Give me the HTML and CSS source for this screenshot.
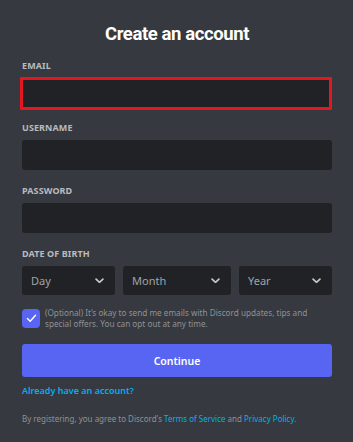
FILE: index.html
```html
<!DOCTYPE html>
<html>
<head>
<meta charset="utf-8">
<link rel="stylesheet" href="styles.css">
</head>
<body>
<main class="card">
  <h1 class="title">Create an account</h1>
  <div class="field">
    <label class="label">EMAIL</label>
    <div class="input input-email"></div>
  </div>
  <div class="field">
    <label class="label">USERNAME</label>
    <div class="input"></div>
  </div>
  <div class="field">
    <label class="label">PASSWORD</label>
    <div class="input"></div>
  </div>
  <div class="field">
    <label class="label">DATE OF BIRTH</label>
    <div class="dob">
      <div class="select select-day"><span>Day</span><svg class="chev" viewBox="0 0 10 6" width="9" height="5.5"><path d="M1.2 1.2 L5 4.8 L8.8 1.2" fill="none" stroke="currentColor" stroke-width="1.9" stroke-linecap="round" stroke-linejoin="round"/></svg></div>
      <div class="select"><span>Month</span><svg class="chev" viewBox="0 0 10 6" width="9" height="5.5"><path d="M1.2 1.2 L5 4.8 L8.8 1.2" fill="none" stroke="currentColor" stroke-width="1.9" stroke-linecap="round" stroke-linejoin="round"/></svg></div>
      <div class="select"><span>Year</span><svg class="chev" viewBox="0 0 10 6" width="9" height="5.5"><path d="M1.2 1.2 L5 4.8 L8.8 1.2" fill="none" stroke="currentColor" stroke-width="1.9" stroke-linecap="round" stroke-linejoin="round"/></svg></div>
    </div>
  </div>
  <div class="optin">
    <div class="checkbox"><svg viewBox="0 0 12 10" width="11" height="9"><path d="M1.5 5 L4.5 8 L10.5 1.5" fill="none" stroke="#fff" stroke-width="1.6" stroke-linecap="round" stroke-linejoin="round"/></svg></div>
    <p class="optin-text">(Optional) It’s okay to send me emails with Discord updates, tips and special offers. You can opt out at any time.</p>
  </div>
  <button class="continue">Continue</button>
  <a class="link already">Already have an account?</a>
  <p class="terms">By registering, you agree to Discord's <a class="link">Terms of Service</a> and <a class="link">Privacy Policy</a>.</p>
</main>
</body>
</html>
```

FILE: styles.css
```css
html, body {
  margin: 0;
  padding: 0;
  background: #36393f;
  height: 100%;
}
body {
  font-family: "Noto Sans", "Open Sans", sans-serif;
  color: #dcddde;
}
.card {
  padding: 23px 21px 0 22px;
  display: flex;
  flex-direction: column;
}
.title {
  margin: 0;
  font-family: Roboto, "Noto Sans", sans-serif;
  font-size: 18.5px;
  line-height: 22px;
  font-weight: 700;
  color: #ffffff;
  text-align: center;
  letter-spacing: -0.4px;
  height: 22px;
  margin-bottom: 15px;
}
.field {
  display: flex;
  flex-direction: column;
  margin-bottom: 15px;
}
.field:first-of-type {
  margin-bottom: 12px;
}
.label {
  font-size: 9px;
  line-height: 12px;
  font-weight: 700;
  color: #b9bbbe;
  letter-spacing: 0.1px;
  margin-bottom: 6px;
}
.input {
  height: 30px;
  background: #202225;
  border-radius: 3px;
}
.input-email {
  height: 27px;
  border: 3px solid #e4161f;
  border-radius: 0;
  margin-left: -2px;
  margin-top: -1px;
  background: #202226;
}
.dob {
  display: flex;
  gap: 8px;
}
.select {
  flex: 0 0 93px;
  height: 29px;
  background: #202225;
  border-radius: 3px;
  display: flex;
  align-items: center;
  justify-content: space-between;
  padding: 0 11px 0 9px;
  box-sizing: border-box;
  font-size: 11px;
  color: #a0a3a7;
}
.select:nth-child(2) {
  flex-basis: 108px;
}
.chev {
  color: #c4c6c9;
  display: block;
}
.optin {
  display: flex;
  align-items: flex-start;
  gap: 5px;
  margin-top: -3px;
}
.checkbox {
  flex: 0 0 18px;
  height: 19px;
  background: #5865f2;
  border-radius: 4px;
  display: flex;
  align-items: center;
  justify-content: center;
  margin-top: 2px;
}
.optin-text {
  margin: 0;
  font-size: 8.2px;
  line-height: 11px;
  color: #8e9297;
}
.continue {
  margin-top: 15px;
  height: 33px;
  border: 0;
  border-radius: 3px;
  background: #5865f2;
  color: #ffffff;
  font-family: inherit;
  font-size: 10.5px;
  font-weight: 600;
  padding: 0;
}
.link {
  color: #00aff4;
}
.already {
  margin-top: 8px;
  font-size: 9px;
  line-height: 12px;
  font-weight: 600;
}
.terms {
  margin: 16px 0 0;
  font-size: 8px;
  line-height: 11px;
  color: #8e9297;
}
```
